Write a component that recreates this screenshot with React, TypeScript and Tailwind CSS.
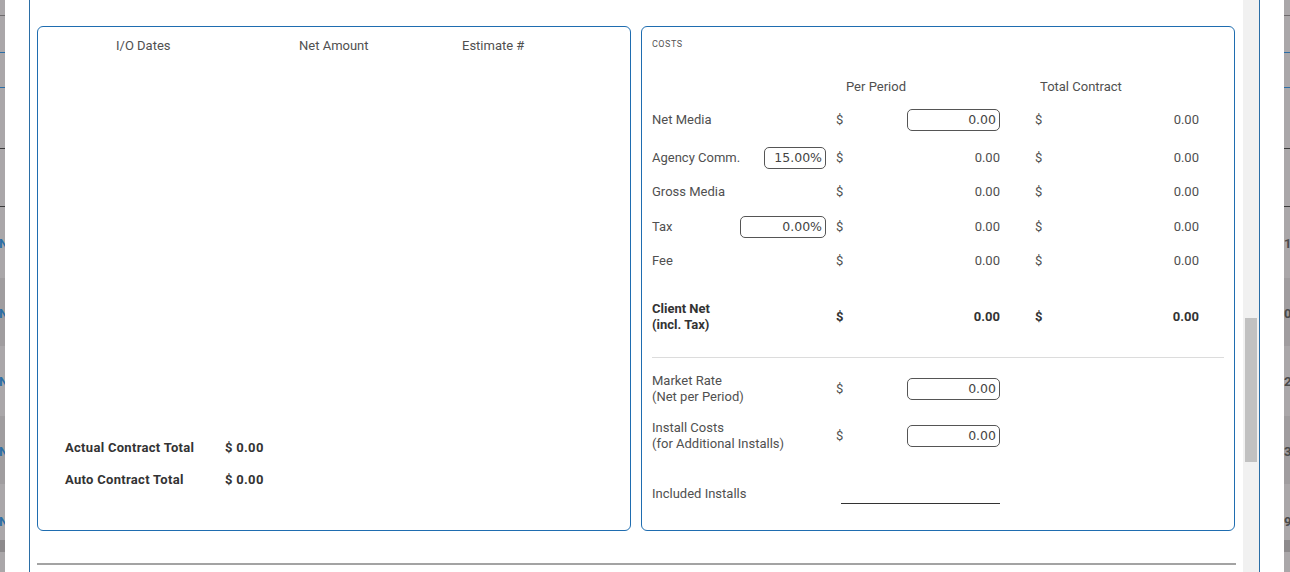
import React from "react"

const txt = "font-['Roboto',sans-serif]"
const mono = "font-['DejaVu_Sans',sans-serif]"

function Backdrop({ side }: { side: "left" | "right" }) {
  const marks = side === "left" ? ["N", "N", "N", "N", "N"] : ["1", "0", "2", "3", "9"]
  const tops = [234, 304, 372, 442, 512]
  return (
    <div className={`relative w-full h-full bg-[#aaa7a9] overflow-hidden ${txt}`}>
      <div className="absolute left-0 right-0 top-[15px] h-px bg-[#6e6b6d]" />
      <div className="absolute left-0 right-0 top-[52px] h-px bg-[#2b6ea6]" />
      <div className="absolute left-0 right-0 top-[87px] h-px bg-[#2b6ea6]" />
      <div className="absolute left-0 right-0 top-[148px] h-px bg-[#3a3a3a]" />
      <div className="absolute left-0 right-0 top-[206px] h-px bg-[#3a3a3a]" />
      <div className="absolute left-0 right-0 top-[278px] h-[68px] bg-[#a09d9f]" />
      <div className="absolute left-0 right-0 top-[416px] h-[68px] bg-[#a09d9f]" />
      <div className="absolute left-0 right-0 top-[540px] h-[12px] bg-[#8d8a8c]" />
      {marks.map((m, i) => (
        <span
          key={i}
          style={{ top: tops[i] }}
          className={`absolute text-[13px] font-bold ${side === "left" ? "-left-[1px] text-[#2b6ea6]" : "left-0 text-[#4a4a4a]"}`}
        >
          {m}
        </span>
      ))}
    </div>
  )
}

function Box({ value, w }: { value: string; w: string }) {
  return (
    <div className={`${w} h-[22px] border border-[#555] rounded-[5px] flex items-center justify-end pr-[3px] text-[12.5px] text-[#444] ${mono}`}>
      {value}
    </div>
  )
}

function CostRow({ label, pct, box, bold, total = true }: { label: React.ReactNode; pct?: React.ReactNode; box?: boolean; bold?: boolean; total?: boolean }) {
  const c = bold ? "font-bold text-[#333]" : "text-[#505050]"
  return (
    <div className={`flex items-center text-[13px] ${c}`}>
      <div className="w-[184px] pr-[10px] flex items-center justify-between">
        <div className="leading-[16px]">{label}</div>
        {pct}
      </div>
      <div className="w-[164px] flex items-center justify-between">
        <span>$</span>
        {box ? <Box value="0.00" w="w-[93px]" /> : <span>0.00</span>}
      </div>
      {total && (
        <>
          <div className="w-[35px]" />
          <div className="w-[164px] flex items-center justify-between">
            <span>$</span>
            <span>0.00</span>
          </div>
        </>
      )}
    </div>
  )
}

export default function App() {
  return (
    <div className={`w-[1290px] h-[572px] flex bg-[#aaa7a9] overflow-hidden ${txt}`}>
      <div className="w-[5px] h-full shrink-0">
        <Backdrop side="left" />
      </div>

      {/* modal */}
      <div className="w-[1279px] h-full bg-white shrink-0 pl-[24px] pr-[24px]">
        <div className="h-full border-x border-[#2b6ea6] flex">
          <div className="flex-1 pl-[7px] pr-[7px]">
            <div className="flex gap-[10px] pt-[26px]">
              {/* left panel */}
              <div className="w-[594px] h-[505px] border border-[#1f6db0] rounded-[6px] flex flex-col">
                <div className="flex text-[13px] text-[#505050] h-[37px] items-center">
                  <span className="ml-[78px] w-[183px]">I/O Dates</span>
                  <span className="w-[163px]">Net Amount</span>
                  <span>Estimate #</span>
                </div>
                <div className="flex-1" />
                <div className="pl-[27px] pb-[40px] flex flex-col gap-[12px] text-[13px] tracking-[0.3px] font-bold text-[#333]">
                  <div className="flex h-[20px] items-center">
                    <span className="w-[160px]">Actual Contract Total</span>
                    <span>$ 0.00</span>
                  </div>
                  <div className="flex h-[20px] items-center">
                    <span className="w-[160px]">Auto Contract Total</span>
                    <span>$ 0.00</span>
                  </div>
                </div>
              </div>

              {/* right panel */}
              <div className="w-[594px] h-[505px] border border-[#1f6db0] rounded-[6px] pl-[10px] pr-[10px]">
                <div className="pt-[11px] h-[23px] leading-[12px] text-[9px] tracking-[0.5px] text-[#555]">COSTS</div>
                <div className="mt-[27px] h-[20px] flex items-center text-[13px] text-[#505050]">
                  <span className="ml-[194px] w-[194px]">Per Period</span>
                  <span>Total Contract</span>
                </div>
                <div className="mt-[12px] h-[22px] flex items-center">
                  <CostRow label="Net Media" box />
                </div>
                <div className="mt-[16px] h-[22px] flex items-center">
                  <CostRow label="Agency Comm." pct={<Box value="15.00%" w="w-[62px]" />} />
                </div>
                <div className="mt-[12px] h-[22px] flex items-center">
                  <CostRow label="Gross Media" />
                </div>
                <div className="mt-[13px] h-[22px] flex items-center">
                  <CostRow label="Tax" pct={<Box value="0.00%" w="w-[86px]" />} />
                </div>
                <div className="mt-[12px] h-[22px] flex items-center">
                  <CostRow label="Fee" />
                </div>
                <div className="mt-[29px] h-[32px] flex items-center">
                  <CostRow bold label={<>Client Net<br />(incl. Tax)</>} />
                </div>
                <div className="mt-[24px] h-px bg-[#dcdcdc]" />
                <div className="mt-[15px] h-[32px] flex items-center">
                  <CostRow label={<>Market Rate<br />(Net per Period)</>} box total={false} />
                </div>
                <div className="mt-[15px] h-[32px] flex items-center">
                  <CostRow label={<>Install Costs<br />(for Additional Installs)</>} box total={false} />
                </div>
                <div className="mt-[31px] h-[22px] flex items-center text-[13px] text-[#505050]">
                  <span className="w-[189px]">Included Installs</span>
                  <div className="w-[159px] h-[20px] border-b border-[#333]" />
                </div>
              </div>
            </div>
            <div className="mt-[32px] h-[2px] bg-[#a3a3a3]" />
          </div>

          {/* scrollbar */}
          <div className="w-[16px] h-full bg-[#f1f1f1] pt-[318px] px-[2px]">
            <div className="h-[144px] bg-[#c1c1c1]" />
          </div>
        </div>
      </div>

      <div className="w-[6px] h-full shrink-0">
        <Backdrop side="right" />
      </div>
    </div>
  )
}
